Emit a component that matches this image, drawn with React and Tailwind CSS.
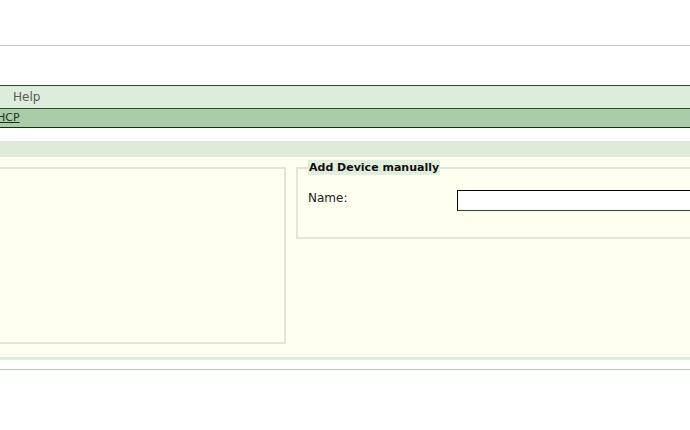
export default function App() {
  return (
    <div className="h-[430px] w-[690px] overflow-hidden bg-white font-['DejaVu_Sans',Verdana,sans-serif]">
      <div className="h-[45px]" />
      <div className="h-px bg-[#c8c8c8]" />
      <div className="h-[39px]" />

      {/* menu bar */}
      <div className="flex h-[24px] items-center border-y border-[#1f4f1f] bg-[#ddeddb] pl-[13px] text-[12px] text-[#5a5a5a]">
        Help
      </div>
      <div className="flex h-[19px] items-center border-b border-[#1a2a1a] bg-[#a8cda8] text-[11px] text-[#1f2f1f]">
        <a className="-ml-[3px] underline">HCP</a>
      </div>

      <div className="h-[13px]" />

      {/* content */}
      <div className="h-[16px] bg-[#deebdb]" />
      <div className="flex h-[203px] gap-[10px] border-b-[3px] border-[#deebdb] bg-[#fffff0] pt-[10px]">
        <fieldset className="-ml-[4px] h-[177px] w-[290px] shrink-0 border-2 border-[#e2e5d9]" />
        <fieldset className="relative -mr-[20px] h-[72px] flex-1 border-2 border-[#e2e5d9] pl-[10px]">
          <div className="absolute -top-[9px] left-[10px] bg-[#e0eedc] px-[1px] text-[11px] leading-[15px] font-bold text-[#111]">
            Add Device manually
          </div>
          <div className="flex items-start pt-[20px]">
            <span className="w-[149px] text-[12px] text-[#222]">Name:</span>
            <input
              type="text"
              className="mt-[1px] h-[21px] flex-1 border border-t-black border-r-black border-b-[#1f4f1f] border-l-black bg-white outline-none"
            />
          </div>
        </fieldset>
      </div>

      <div className="h-[9px]" />
      <div className="h-px bg-[#b5c9b5]" />
    </div>
  );
}
